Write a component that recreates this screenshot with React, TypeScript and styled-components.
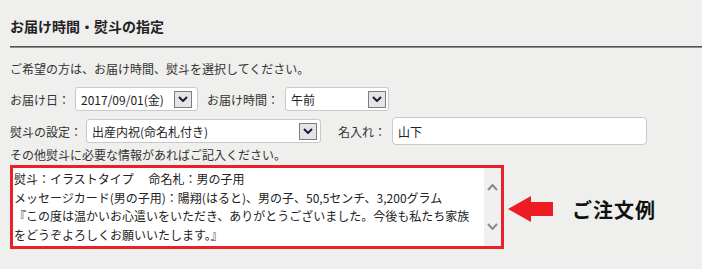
import React from "react";
import styled, { createGlobalStyle } from "styled-components";

const Global = createGlobalStyle`
  html, body { margin: 0; padding: 0; background: #efefed; }
  body { font-family: "Noto Sans CJK JP", "Noto Sans", sans-serif; color: #333; overflow: hidden; }
`;

const Page = styled.div`
  padding: 16px 0 0 10px;
  width: 692px;
  height: 253px;
  background: #efefed;
  font-size: 12px;
`;

const Title = styled.h2`
  margin: 0;
  font-size: 14px;
  line-height: 20px;
  font-weight: 700;
  color: #222;
`;

const Rule = styled.div`
  margin-top: 10px;
  height: 0;
  border-top: 1px solid #555;
  border-bottom: 1px solid #8a8a8a;
`;

const Text = styled.p<{ $mt: number }>`
  margin: ${(p) => p.$mt}px 0 0;
  line-height: 18px;
  font-size: 12px;
  color: #333;
`;

const Row = styled.div<{ $mt: number; $h: number }>`
  display: flex;
  align-items: center;
  margin-top: ${(p) => p.$mt}px;
  height: ${(p) => p.$h}px;
`;

const Label = styled.span<{ $ml?: number }>`
  margin-left: ${(p) => p.$ml ?? 0}px;
  font-size: 12px;
  color: #333;
  white-space: nowrap;
`;

const SelectBox = styled.div<{ $w: number; $ml: number; $pr: number }>`
  box-sizing: border-box;
  display: flex;
  align-items: center;
  justify-content: space-between;
  width: ${(p) => p.$w}px;
  height: 24px;
  margin-left: ${(p) => p.$ml}px;
  padding: 0 ${(p) => p.$pr}px 0 5px;
  background: #fff;
  border: 1px solid #c9c9c9;
  border-radius: 3px;
  font-size: 12px;
  color: #222;
  white-space: nowrap;
`;

const DropButton = styled.span`
  box-sizing: border-box;
  display: flex;
  align-items: center;
  justify-content: center;
  width: 18px;
  height: 17px;
  border: 1px solid #7d7d7d;
  background: #e4e4e4;
`;

const TextInput = styled.div<{ $w: number; $ml: number }>`
  box-sizing: border-box;
  display: flex;
  align-items: center;
  width: ${(p) => p.$w}px;
  height: 28px;
  margin-left: ${(p) => p.$ml}px;
  padding-left: 5px;
  background: #fff;
  border: 1px solid #c9c9c9;
  border-radius: 4px;
  font-size: 12px;
  color: #222;
`;

const ExampleRow = styled.div`
  display: flex;
  align-items: center;
  margin-top: 1px;
`;

const NoteBox = styled.div`
  box-sizing: border-box;
  display: flex;
  width: 494px;
  height: 84px;
  border: 3px solid #e8212b;
  background: #fff;
`;

const NoteText = styled.div`
  flex: 1;
  padding: 2px 1px 0 1px;
  font-size: 12px;
  line-height: 18.6px;
  color: #222;
  white-space: pre;
  overflow: hidden;
`;

const ScrollTrack = styled.div`
  width: 17px;
  background: #f0f0f0;
  display: flex;
  flex-direction: column;
  justify-content: space-between;
  align-items: center;
  padding: 16px 0 16px;
  box-sizing: border-box;
`;

const ArrowWrap = styled.div`
  margin-left: 4px;
  margin-top: 4px;
  display: flex;
`;

const Caption = styled.span`
  margin-left: 19px;
  margin-top: 4px;
  font-size: 20px;
  font-weight: 700;
  letter-spacing: 1px;
  color: #111;
`;

const Chevron = ({ up, color, w = 10, h = 6, sw = 2 }: { up?: boolean; color: string; w?: number; h?: number; sw?: number }) => (
  <svg width={w} height={h} viewBox={`0 0 ${w} ${h}`}>
    <polyline
      points={
        up
          ? `1,${h - 1} ${w / 2},1 ${w - 1},${h - 1}`
          : `1,1 ${w / 2},${h - 1} ${w - 1},1`
      }
      fill="none"
      stroke={color}
      strokeWidth={sw}
    />
  </svg>
);

const Select = ({ w, ml, pr, children }: { w: number; ml: number; pr: number; children: React.ReactNode }) => (
  <SelectBox $w={w} $ml={ml} $pr={pr}>
    <span>{children}</span>
    <DropButton>
      <Chevron color="#14203a" w={10} h={6} sw={2} />
    </DropButton>
  </SelectBox>
);

export default function App() {
  return (
    <>
      <Global />
      <Page>
        <Title>お届け時間・熨斗の指定</Title>
        <Rule />
        <Text $mt={12}>ご希望の方は、お届け時間、熨斗を選択してください。</Text>
        <Row $mt={9} $h={24}>
          <Label>お届け日：</Label>
          <Select w={123} ml={5} pr={5}>2017/09/01(金)</Select>
          <Label $ml={9}>お届け時間：</Label>
          <Select w={104} ml={6} pr={2}>午前</Select>
        </Row>
        <Row $mt={6} $h={28}>
          <Label>熨斗の設定：</Label>
          <Select w={235} ml={4} pr={3}>出産内祝(命名札付き)</Select>
          <Label $ml={17}>名入れ：</Label>
          <TextInput $w={255} $ml={6}>山下</TextInput>
        </Row>
        <Text $mt={1}>その他熨斗に必要な情報があればご記入ください。</Text>
        <ExampleRow>
          <NoteBox>
            <NoteText>
              {"熨斗：イラストタイプ　 命名札：男の子用\nメッセージカード(男の子用)：陽翔(はると)、男の子、50,5センチ、3,200グラム\n『この度は温かいお心遣いをいただき、ありがとうございました。今後も私たち家族\nをどうぞよろしくお願いいたします。』"}
            </NoteText>
            <ScrollTrack>
              <Chevron up color="#8a8a8a" w={11} h={7} sw={2} />
              <Chevron color="#8a8a8a" w={11} h={7} sw={2} />
            </ScrollTrack>
          </NoteBox>
          <ArrowWrap>
            <svg width="45" height="26" viewBox="0 0 45 26">
              <polygon points="0,13 23,0 23,6 45,6 45,20 23,20 23,26" fill="#ed1c24" />
            </svg>
          </ArrowWrap>
          <Caption>ご注文例</Caption>
        </ExampleRow>
      </Page>
    </>
  );
}
